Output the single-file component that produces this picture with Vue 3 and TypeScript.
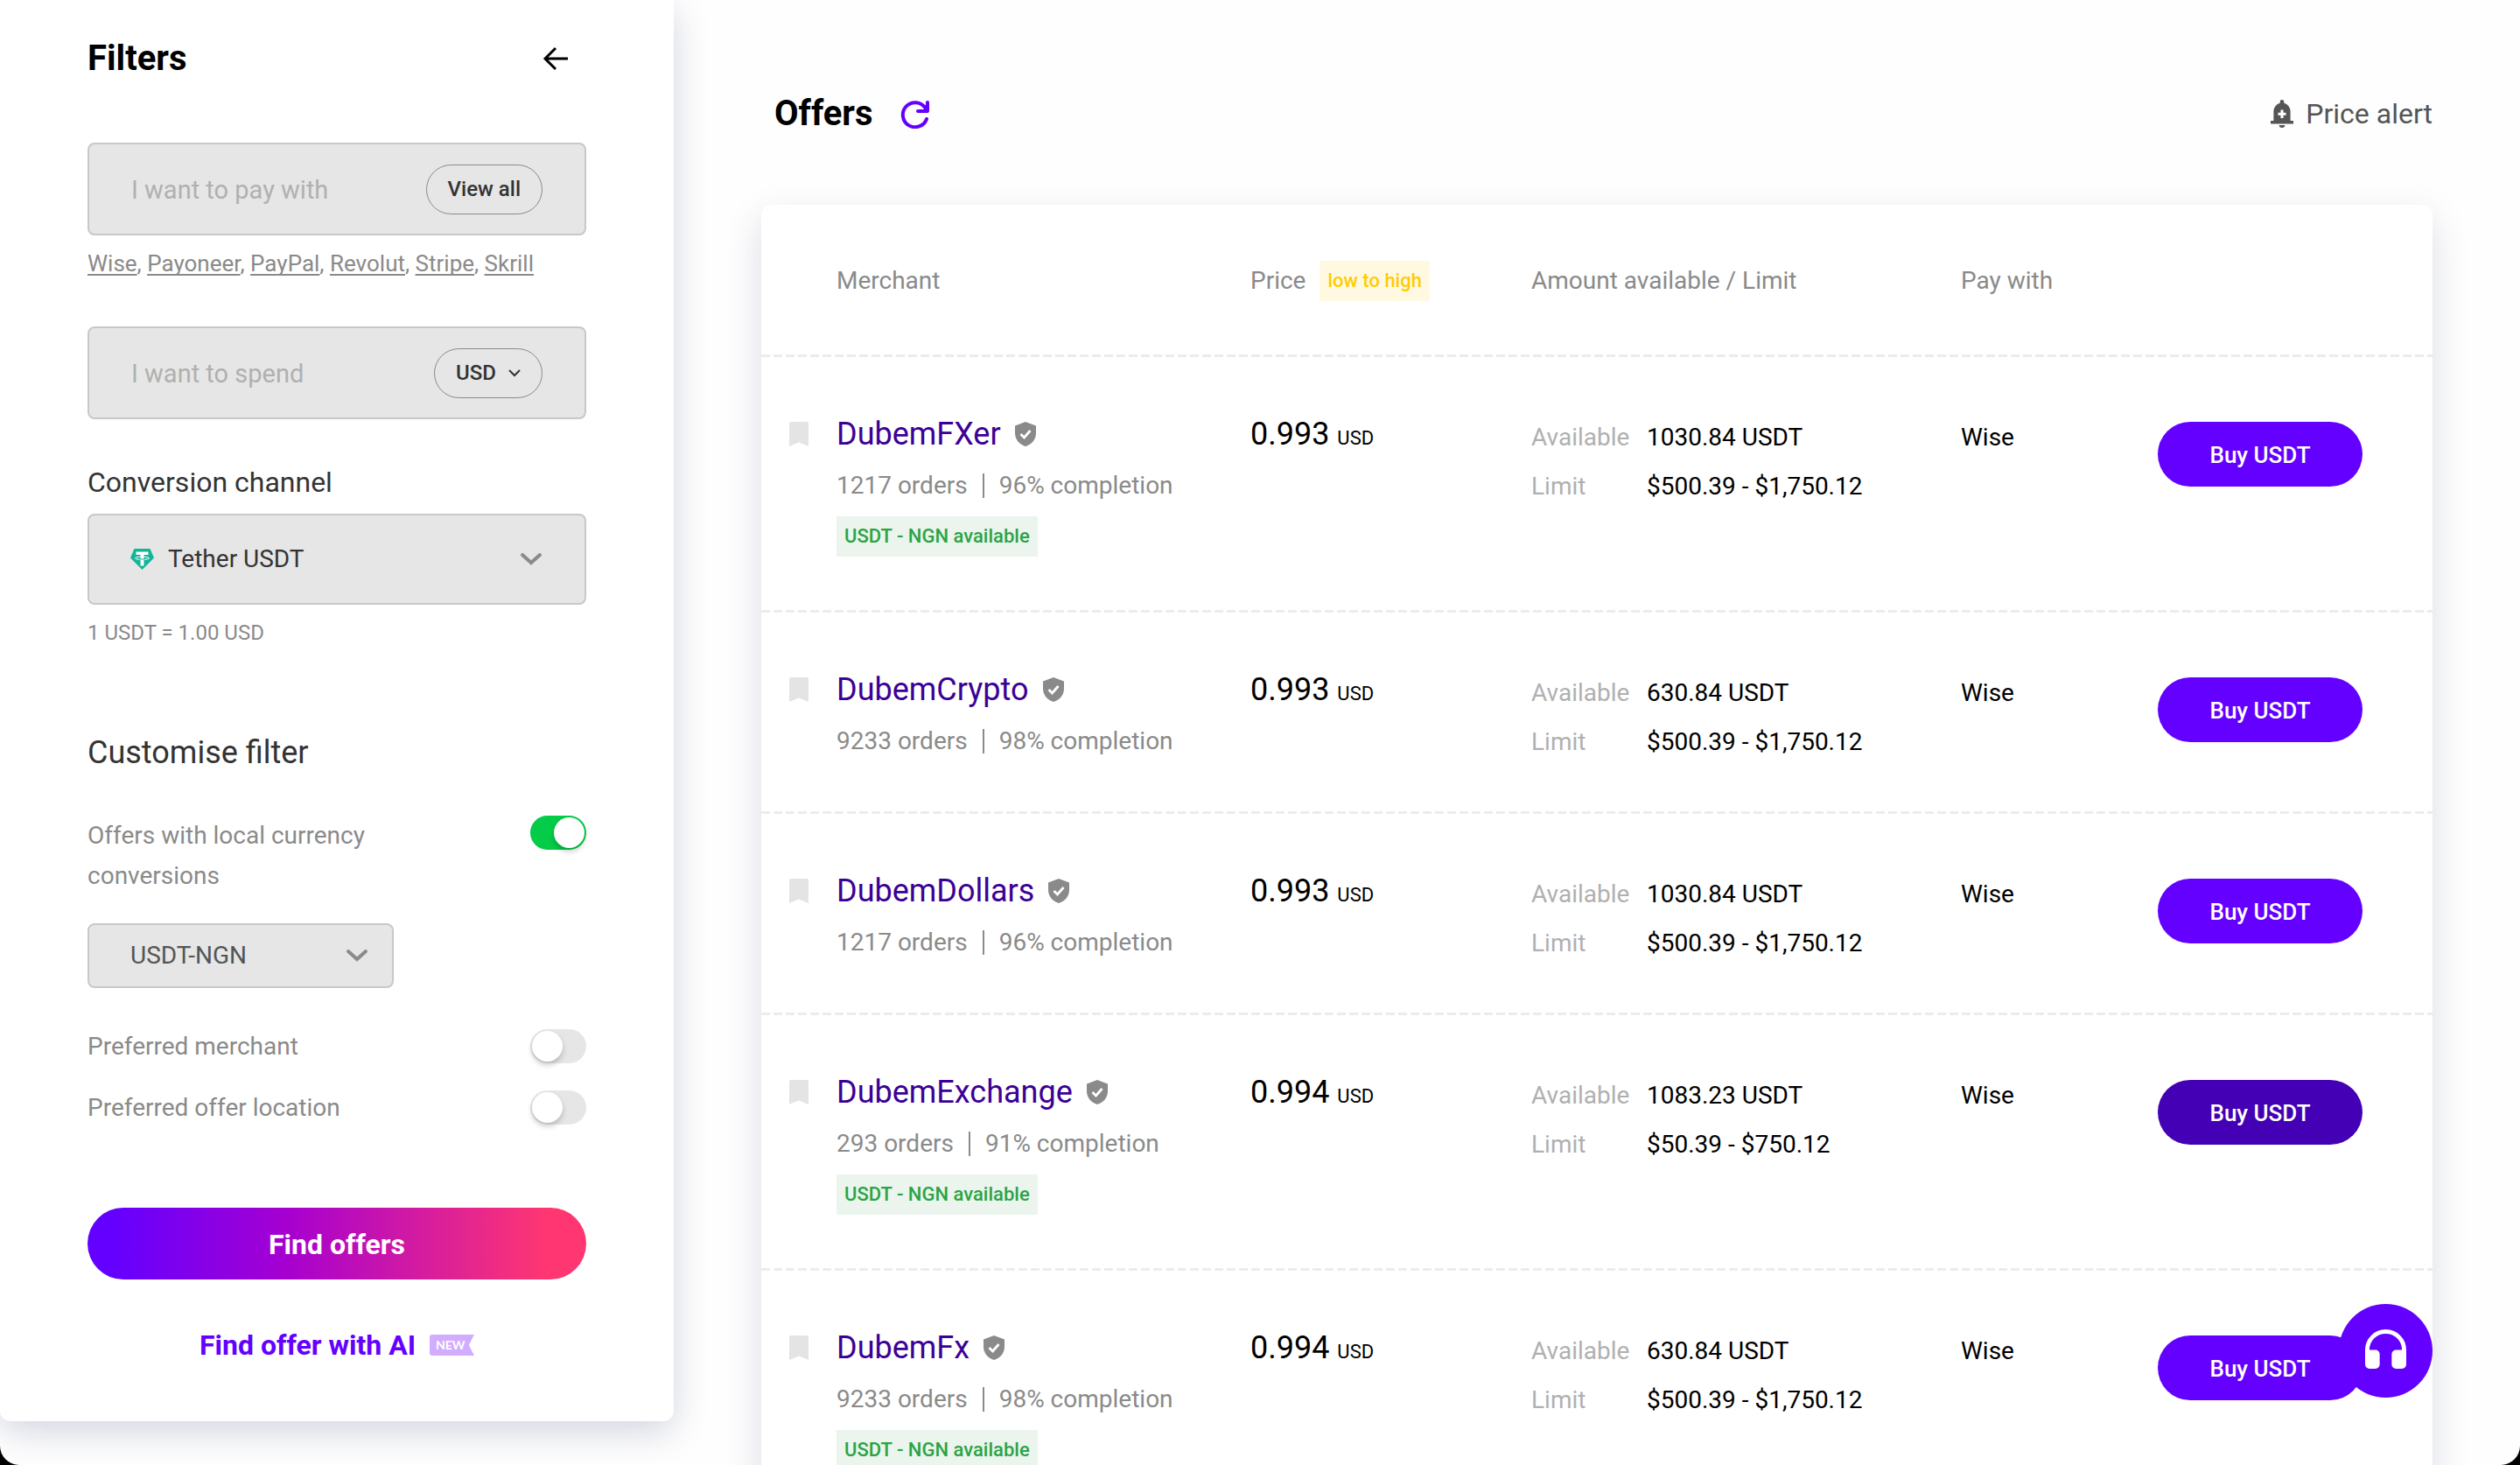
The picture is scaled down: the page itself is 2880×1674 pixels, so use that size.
<script setup lang="ts">
import { ref } from 'vue'

interface Offer {
  id: number
  merchant: string
  orders: number
  completion: number
  price: string
  available: string
  limit: string
  payWith: string
  localPair: boolean
  active?: boolean
}

const platforms = ['Wise', 'Payoneer', 'PayPal', 'Revolut', 'Stripe', 'Skrill']

const offers: Offer[] = [
  { id: 1, merchant: 'DubemFXer', orders: 1217, completion: 96, price: '0.993', available: '1030.84 USDT', limit: '$500.39 - $1,750.12', payWith: 'Wise', localPair: true },
  { id: 2, merchant: 'DubemCrypto', orders: 9233, completion: 98, price: '0.993', available: '630.84 USDT', limit: '$500.39 - $1,750.12', payWith: 'Wise', localPair: false },
  { id: 3, merchant: 'DubemDollars', orders: 1217, completion: 96, price: '0.993', available: '1030.84 USDT', limit: '$500.39 - $1,750.12', payWith: 'Wise', localPair: false },
  { id: 4, merchant: 'DubemExchange', orders: 293, completion: 91, price: '0.994', available: '1083.23 USDT', limit: '$50.39 - $750.12', payWith: 'Wise', localPair: true, active: true },
  { id: 5, merchant: 'DubemFx', orders: 9233, completion: 98, price: '0.994', available: '630.84 USDT', limit: '$500.39 - $1,750.12', payWith: 'Wise', localPair: true },
]

const payWith = ref('')
const spend = ref('')
const currency = ref('USD')
const channel = ref('Tether USDT')
const pair = ref('USDT-NGN')
const localOnly = ref(true)
const preferredMerchant = ref(false)
const preferredLocation = ref(false)
</script>

<template>
  <div class="page">
    <aside class="sidebar">
      <header class="sidebar-head">
        <h2 class="heading">Filters</h2>
        <button class="icon-button back" type="button" aria-label="Collapse filters">
          <svg width="30" height="28" viewBox="0 0 30 28" fill="none" stroke="#000" stroke-width="3">
            <path d="M15 2 3 14l12 12M3 14h26" />
          </svg>
        </button>
      </header>

      <div class="field">
        <input v-model="payWith" type="text" placeholder="I want to pay with" aria-label="I want to pay with" />
        <button class="pill view-all" type="button">View all</button>
      </div>
      <p class="platforms">
        <template v-for="(name, i) in platforms" :key="name"><a href="#">{{ name }}</a><template v-if="i < platforms.length - 1">, </template></template>
      </p>

      <div class="field">
        <input v-model="spend" type="text" placeholder="I want to spend" aria-label="I want to spend" />
        <span class="pill currency">
          <select v-model="currency" aria-label="Currency">
            <option>USD</option>
          </select>
          <svg width="14" height="9" viewBox="0 0 14 9" fill="none" stroke="#333" stroke-width="2">
            <path d="m1 1 6 6 6-6" />
          </svg>
        </span>
      </div>

      <label class="channel-label" for="channel">Conversion channel</label>
      <div class="select-box channel">
        <svg width="27" height="24" viewBox="0 0 27 24">
          <path d="M4.500 0h18L27 10.500 13.500 24 0 10.500z" fill="#12b596" />
          <path d="M6.500 3.500h14V7H15.500v12.500h-4V7h-5z" fill="#fff" />
          <ellipse cx="13.500" cy="10.800" rx="8" ry="1.700" fill="none" stroke="#fff" />
          <path d="M10.500 12h6" stroke="#12b596" />
        </svg>
        <select id="channel" v-model="channel">
          <option>Tether USDT</option>
        </select>
        <svg class="chevron" width="26" height="16" viewBox="0 0 26 16">
          <path d="m3 3 10 9 10-9" />
        </svg>
      </div>
      <p class="rate">1 USDT = 1.00 USD</p>

      <h3 class="subheading">Customise filter</h3>
      <label class="switch-row tall">
        <span class="switch-text">Offers with local currency conversions</span>
        <input v-model="localOnly" class="switch" type="checkbox" />
      </label>
      <div class="select-box pair">
        <select v-model="pair" aria-label="Local currency pair">
          <option>USDT-NGN</option>
        </select>
        <svg class="chevron" width="26" height="16" viewBox="0 0 26 16">
          <path d="m3 3 10 9 10-9" />
        </svg>
      </div>
      <div class="switches">
        <label class="switch-row">
          <span class="switch-text">Preferred merchant</span>
          <input v-model="preferredMerchant" class="switch" type="checkbox" />
        </label>
        <label class="switch-row">
          <span class="switch-text">Preferred offer location</span>
          <input v-model="preferredLocation" class="switch" type="checkbox" />
        </label>
      </div>

      <button class="find" type="button">Find offers</button>
      <a class="find-ai" href="#">Find offer with AI <span class="new">NEW</span></a>
    </aside>

    <main class="main">
      <header class="main-head">
        <h1 class="heading">Offers</h1>
        <button class="icon-button" type="button" aria-label="Refresh offers">
          <svg width="34" height="34" viewBox="0 0 34 34" fill="none" stroke="#6400ff" stroke-width="4" stroke-linecap="round" stroke-linejoin="round">
            <path d="M30 23A14 14 0 1 1 28.500 10.500" />
            <path d="M31 4v10H20" />
            <path d="M31 7v7h-6z" fill="#6400ff" stroke="none" />
          </svg>
        </button>
        <a class="price-alert" href="#">
          <svg width="26" height="32" viewBox="0 0 26 32" fill="#555">
            <path d="M13 0a2.300 2.300 0 0 1 2.300 2.300v1.500A9.600 9.600 0 0 1 22.600 13v11H26v3.500H0V24h3.400V13a9.600 9.600 0 0 1 7.300-9.200V2.300A2.300 2.300 0 0 1 13 0z" />
            <path d="M9.700 29h6.600a3.300 3 0 0 1-6.600 0z" />
            <path d="M11.500 11.500h3v3.200h3v3h-3v3.200h-3v-3.200h-3v-3h3z" fill="#fff" />
          </svg>
          Price alert
        </a>
      </header>

      <section class="card">
        <table class="offers">
          <colgroup>
            <col class="c-mark" />
            <col class="c-merchant" />
            <col class="c-price" />
            <col class="c-amount" />
            <col class="c-pay" />
            <col class="c-action" />
          </colgroup>
          <thead>
            <tr>
              <th></th>
              <th scope="col">Merchant</th>
              <th scope="col">
                <span class="sort">Price <button class="sort-order" type="button">low to high</button></span>
              </th>
              <th scope="col">Amount available / Limit</th>
              <th scope="col">Pay with</th>
              <th></th>
            </tr>
          </thead>
          <tbody>
            <tr v-for="offer in offers" :key="offer.id">
              <td class="mark-cell">
                <button class="icon-button" type="button" :aria-label="`Bookmark ${offer.merchant}`">
                  <svg width="22" height="28" viewBox="0 0 22 28">
                    <path d="M2 0h18a2 2 0 0 1 2 2v26l-11-4.500L0 28V2a2 2 0 0 1 2-2z" fill="#e4e4e4" />
                  </svg>
                </button>
              </td>
              <td class="merchant-cell">
                <div class="merchant">
                  <a href="#">{{ offer.merchant }}</a>
                  <svg width="24" height="28" viewBox="0 0 24 28">
                    <path d="M12 0 0 4.500V13c0 7 5 13 12 15 7-2 12-8 12-15V4.500z" fill="#8a8a8a" />
                    <path d="m6.500 14 4 4 7-8" fill="none" stroke="#fff" stroke-width="2.800" />
                  </svg>
                </div>
                <div class="stats">
                  <span>{{ offer.orders }} orders</span>
                  <i class="bar"></i>
                  <span>{{ offer.completion }}% completion</span>
                </div>
                <div v-if="offer.localPair" class="tag">USDT - NGN available</div>
              </td>
              <td class="price-cell">
                <div class="price">{{ offer.price }} <small>USD</small></div>
              </td>
              <td class="text-cell">
                <dl class="amounts">
                  <dt>Available</dt>
                  <dd>{{ offer.available }}</dd>
                  <dt>Limit</dt>
                  <dd>{{ offer.limit }}</dd>
                </dl>
              </td>
              <td class="text-cell">{{ offer.payWith }}</td>
              <td>
                <button class="buy" :class="{ active: offer.active }" type="button">Buy USDT</button>
              </td>
            </tr>
          </tbody>
        </table>
      </section>
    </main>

    <button class="support" type="button" aria-label="Contact support">
      <svg width="47" height="45" viewBox="0 0 48 46">
        <path d="M2.500 38V24a21.500 21.500 0 0 1 43 0v14" fill="none" stroke="#fff" stroke-width="5" />
        <path d="M0 24h12a5 5 0 0 1 5 5v12a5 5 0 0 1-5 5H5a5 5 0 0 1-5-5zM48 24H36a5 5 0 0 0-5 5v12a5 5 0 0 0 5 5h7a5 5 0 0 0 5-5z" fill="#fff" />
      </svg>
    </button>
  </div>
</template>

<style>
body {
  background: #000;
}
</style>

<style scoped>
.page,
.page * {
  box-sizing: border-box;
}

.page {
  display: flex;
  align-items: flex-start;
  height: 100vh;
  overflow: hidden;
  background: #fefefe;
  border-radius: 0 0 22px 22px;
  font: 400 28px/34px Roboto, 'Liberation Sans', sans-serif;
  color: #000;
}

h1,
h2,
h3,
p,
dl,
dd {
  margin: 0;
}

button,
input,
select {
  margin: 0;
  padding: 0;
  border: 0;
  background: none;
  font: inherit;
  color: inherit;
}

button {
  cursor: pointer;
}

select {
  appearance: none;
}

svg {
  display: block;
  flex: none;
}

a {
  color: inherit;
  text-decoration: none;
}

.heading {
  font-size: 40px;
  line-height: 48px;
  font-weight: 700;
}

/* Filters */
.sidebar {
  display: flex;
  flex-direction: column;
  flex: none;
  width: 770px;
  padding: 43px 100px 68px;
  background: #fff;
  border-radius: 0 0 12px 12px;
  box-shadow: 0 12px 40px rgba(40, 50, 100, 0.2);
}

.sidebar-head {
  display: flex;
  align-items: center;
  justify-content: space-between;
  padding-right: 20px;
  margin-bottom: 72px;
}

.field,
.select-box {
  display: flex;
  align-items: center;
  background: #e6e6e6;
  border: 2px solid #c8c8c8;
  border-radius: 8px;
}

.field {
  height: 106px;
  padding: 0 48px;
}

.field input {
  flex: 1;
  min-width: 0;
  padding-top: 2px;
  font-size: 29px;
}

.field input::placeholder {
  color: #b0b0b0;
  opacity: 1;
}

.pill {
  height: 57px;
  padding: 0 24px;
  border: 1px solid #8a8a8a;
  border-radius: 29px;
  font-size: 24px;
  font-weight: 500;
  color: #333;
}

.currency {
  display: flex;
  align-items: center;
  gap: 14px;
}

.platforms {
  margin: 16px 0 56px;
  font-size: 26px;
  line-height: 32px;
  color: #8a8a8a;
}

.platforms a {
  text-decoration: underline 2px;
  text-underline-offset: 3px;
  text-decoration-skip-ink: none;
}

.channel-label {
  margin: 53px 0 17px;
  font-size: 32px;
  line-height: 38px;
  color: #333;
}

.select-box select {
  flex: 1;
  min-width: 0;
}

.channel {
  height: 104px;
  padding: 0 48px 0 47px;
  gap: 16px;
  color: #333;
}

.chevron {
  fill: none;
  stroke: #8a8a8a;
  stroke-width: 4;
  stroke-linecap: round;
}

.rate {
  margin: 16px 0 100px;
  font-size: 24px;
  line-height: 32px;
  color: #8a8a8a;
}

.subheading {
  margin-bottom: 51px;
  font-size: 36px;
  line-height: 42px;
  font-weight: 400;
  color: #333;
}

.switch-row {
  display: flex;
  align-items: center;
  justify-content: space-between;
  color: #8a8a8a;
}

.tall {
  align-items: flex-start;
  line-height: 46px;
}

.switch-text {
  max-width: 360px;
}

.switch {
  appearance: none;
  width: 64px;
  height: 39px;
  padding: 2px;
  border-radius: 20px;
  background: #e6e6e6;
}

.switch::before {
  content: '';
  display: block;
  width: 35px;
  height: 35px;
  border-radius: 50%;
  background: #fff;
  box-shadow: 0 4px 6px rgba(0, 0, 0, 0.2);
}

.switch:checked {
  background: #04cb48;
}

.switch:checked::before {
  margin-left: auto;
}

.pair {
  width: 350px;
  height: 74px;
  margin: 31px 0 47px;
  padding: 0 27px 0 47px;
  color: #555;
}

.switches {
  display: flex;
  flex-direction: column;
  gap: 31px;
  margin-bottom: 95px;
}

.find {
  height: 82px;
  margin-bottom: 56px;
  padding-top: 2px;
  border-radius: 41px;
  background: linear-gradient(90deg, #6400ff 5%, #a600d0 40%, #ff3672 92%);
  font-size: 32px;
  font-weight: 700;
  color: #fff;
}

.find-ai {
  display: flex;
  align-items: center;
  justify-content: center;
  gap: 16px;
  font-size: 32px;
  line-height: 38px;
  font-weight: 700;
  color: #6400ff;
}

.new {
  width: 51px;
  padding-left: 7px;
  border-radius: 3px 0 0 3px;
  background: #d2acff;
  clip-path: polygon(0 0, 100% 0, 88% 50%, 100% 100%, 0 100%);
  font: 700 14px/24px Lato, sans-serif;
  color: #fff;
}

/* Offers */
.main {
  flex: 1;
  min-width: 0;
  padding: 106px 100px 0;
}

.main-head {
  display: flex;
  align-items: center;
  padding-left: 15px;
  margin-bottom: 80px;
}

.main-head .heading {
  margin-right: 31px;
}

.price-alert {
  display: flex;
  align-items: center;
  gap: 14px;
  margin-left: auto;
  font-size: 32px;
  color: #555;
}

.card {
  background: #fff;
  border-radius: 12px 12px 0 0;
  box-shadow: 0 16px 40px rgba(40, 50, 100, 0.17);
}

.offers {
  width: 100%;
  table-layout: fixed;
  border-collapse: collapse;
}

.c-mark {
  width: 86px;
}

.c-merchant {
  width: 473px;
}

.c-price {
  width: 321px;
}

.c-amount {
  width: 491px;
}

.c-pay {
  width: 225px;
}

.c-action {
  width: 314px;
}

th {
  height: 171px;
  padding: 2px 0 0;
  text-align: left;
  vertical-align: middle;
  font-weight: 400;
  color: #8a8a8a;
}

.sort {
  display: flex;
  align-items: center;
  gap: 16px;
}

.sort-order,
.tag {
  width: fit-content;
  padding: 0 9px;
  font-size: 22px;
  line-height: 46px;
  font-weight: 500;
}

.sort-order {
  background: #fff9e2;
  color: #ffcc00;
}

tbody tr {
  height: 230px;
  background: repeating-linear-gradient(90deg, #ececec 0 10px, transparent 10px 14px) 0 0 / 100% 3px no-repeat;
}

td {
  padding: 77px 0 61px;
  vertical-align: top;
}

.merchant-cell,
.price-cell {
  padding-top: 70px;
}

.text-cell {
  padding-top: 78px;
}

.mark-cell {
  padding-left: 32px;
}

.merchant {
  display: flex;
  align-items: center;
  gap: 16px;
  margin-bottom: 21px;
  font-size: 36px;
  line-height: 42px;
  color: #3c0096;
}

.stats {
  display: flex;
  align-items: center;
  gap: 17px;
  color: #8a8a8a;
}

.bar {
  width: 2px;
  height: 28px;
  background: #8a8a8a;
}

.tag {
  margin-top: 18px;
  background: #ebf4ed;
  color: #2aa444;
}

.price {
  font-size: 36px;
  line-height: 42px;
}

.price small {
  font-size: 22px;
}

.amounts {
  display: grid;
  grid-template-columns: 132px 1fr;
  row-gap: 22px;
}

.amounts dt {
  color: #b0b0b0;
}

.buy {
  display: block;
  width: 234px;
  height: 74px;
  padding-top: 2px;
  border-radius: 37px;
  background: #6400ff;
  font-size: 26px;
  font-weight: 500;
  color: #fff;
}

.buy.active {
  background: #4300b4;
}

.icon-button {
  display: block;
}

.support {
  position: fixed;
  right: 100px;
  bottom: 77px;
  display: grid;
  place-items: center;
  width: 107px;
  height: 107px;
  padding-bottom: 4px;
  border-radius: 50%;
  background: #6400ff;
}
</style>
